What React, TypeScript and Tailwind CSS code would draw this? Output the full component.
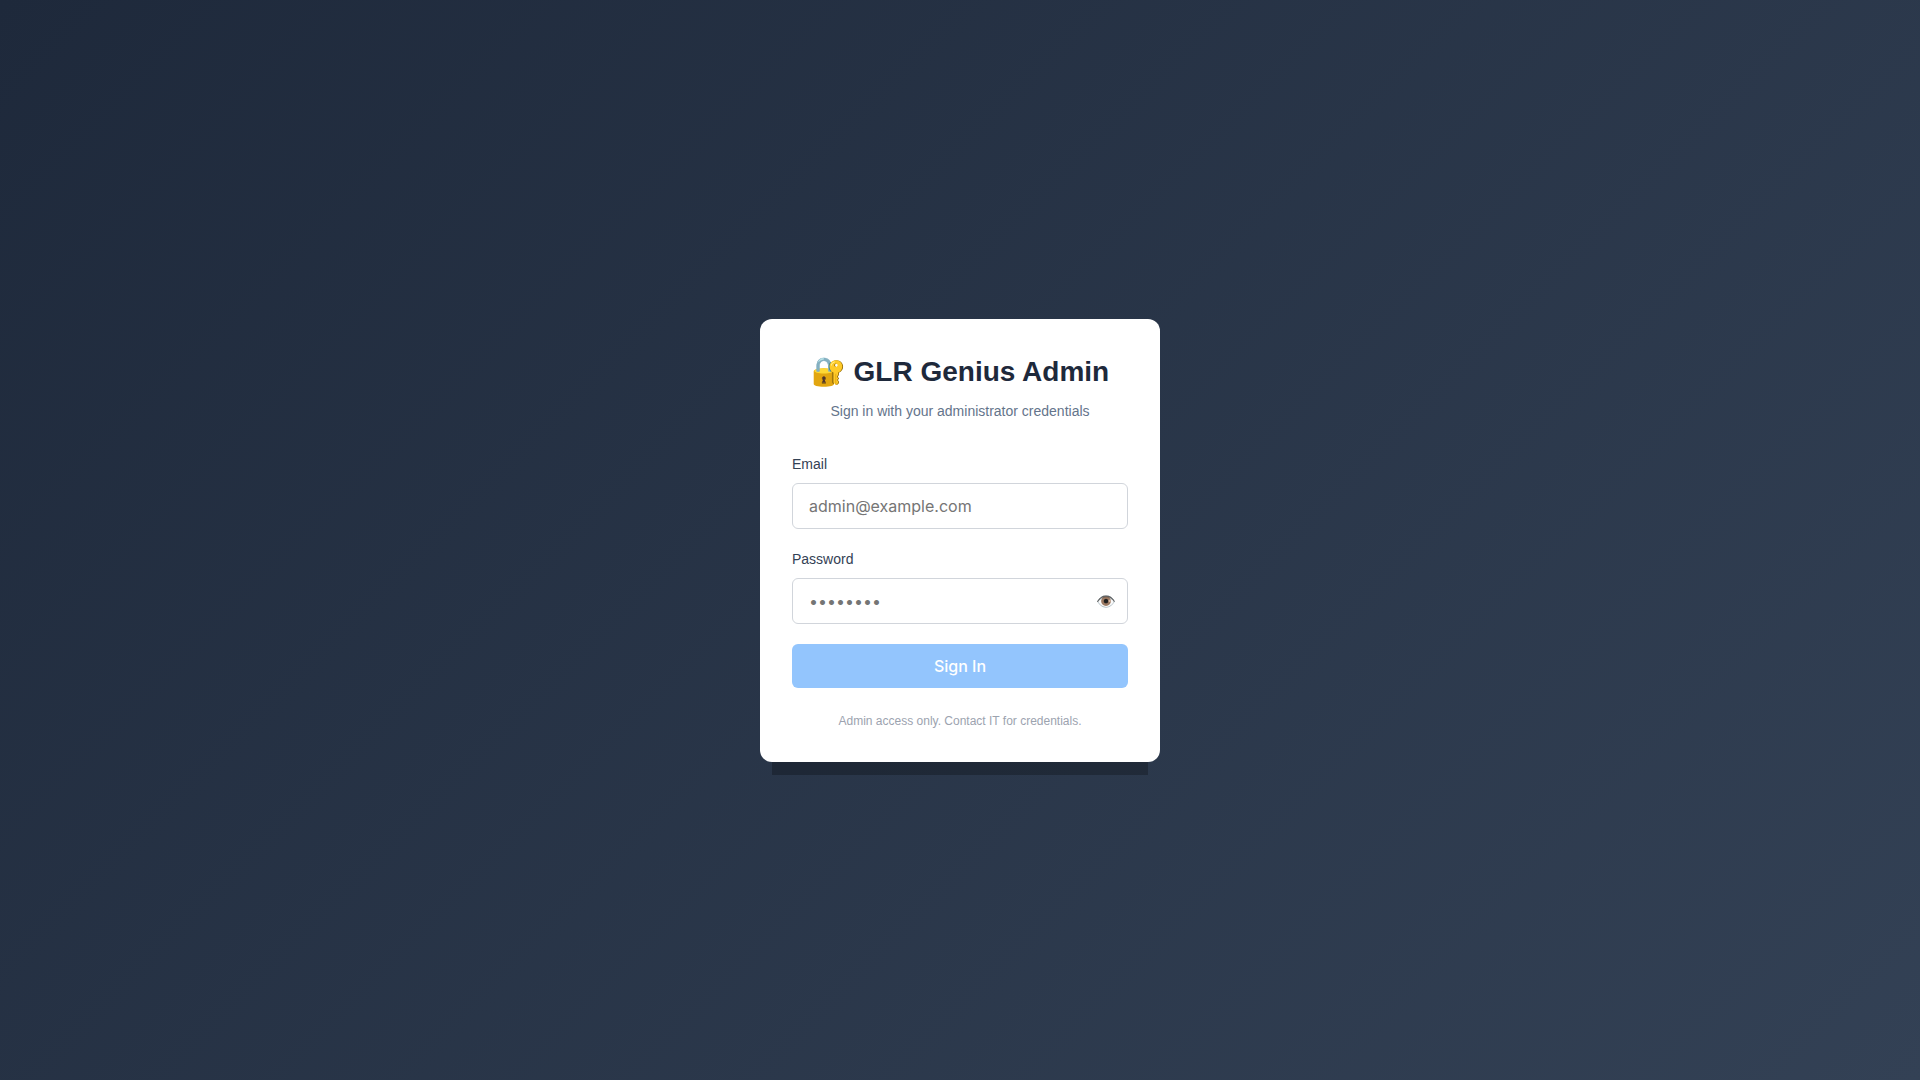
import React, { useState } from 'react';

const inputClass =
  "w-full rounded-md border border-[#d1d5db] bg-white px-4 py-[10px] font-['Inter',sans-serif] text-base leading-6 text-[#1f2937] outline-none placeholder:text-[#757575] focus:border-blue-500";

const App: React.FC = () => {
  const [email, setEmail] = useState('');
  const [password, setPassword] = useState('');
  const [showPassword, setShowPassword] = useState(false);

  const canSubmit = email !== '' && password !== '';

  return (
    <main className="flex min-h-screen items-center justify-center bg-[linear-gradient(135deg,#1e293b_0%,#334155_100%)] font-['Liberation_Sans',sans-serif]">
      <div className="w-full max-w-[400px] rounded-xl bg-white p-8 shadow-[0_25px_0_-12px_rgba(0,0,0,0.25)]">
        {/* Header */}
        <div className="mb-8 text-center">
          <h1 className="mb-2 text-[28px] leading-[42px] font-bold text-[#1e293b]">🔐 GLR Genius Admin</h1>
          <p className="text-sm leading-[21px] text-[#64748b]">Sign in with your administrator credentials</p>
        </div>

        <form onSubmit={(e) => e.preventDefault()}>
          <div className="mb-5">
            <label htmlFor="email" className="mb-2 block text-sm leading-[21px] text-[#334155]">Email</label>
            <input
              id="email"
              type="email"
              value={email}
              onChange={(e) => setEmail(e.target.value)}
              placeholder="admin@example.com"
              className={inputClass}
            />
          </div>

          <div className="mb-5">
            <label htmlFor="password" className="mb-2 block text-sm leading-[21px] text-[#334155]">Password</label>
            <div className="relative">
              <input
                id="password"
                type={showPassword ? 'text' : 'password'}
                value={password}
                onChange={(e) => setPassword(e.target.value)}
                placeholder="••••••••"
                className={inputClass}
              />
              <button
                type="button"
                aria-label="Toggle password visibility"
                onClick={() => setShowPassword(!showPassword)}
                className="absolute inset-y-0 right-3 flex items-center font-['Inter',sans-serif] text-base"
              >
                👁️
              </button>
            </div>
          </div>

          <button
            type="submit"
            disabled={!canSubmit}
            className="w-full rounded-md bg-[#3b82f6] py-[10px] font-['Inter',sans-serif] text-base leading-6 font-medium text-white disabled:bg-[#93c5fd]"
          >
            Sign In
          </button>
        </form>

        <p className="mt-6 text-center text-xs leading-[18px] text-[#9ca3af]">Admin access only. Contact IT for credentials.</p>
      </div>
    </main>
  );
};

export default App;
